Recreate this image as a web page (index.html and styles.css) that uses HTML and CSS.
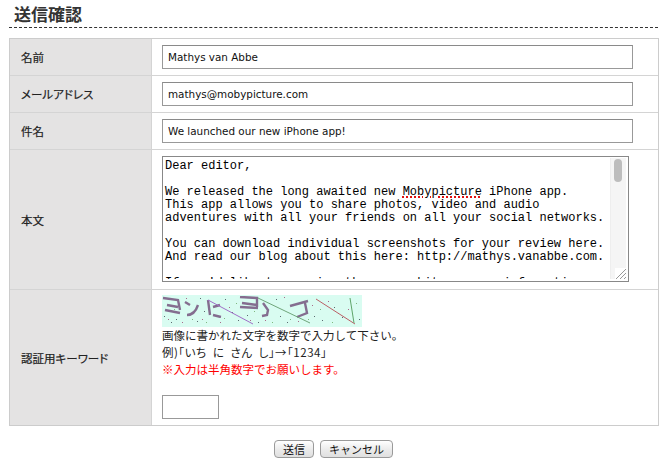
FILE: index.html
```html
<!DOCTYPE html>
<html lang="ja">
<head>
<meta charset="utf-8">
<title>送信確認</title>
<link rel="stylesheet" href="styles.css">
</head>
<body>
<h1 class="title">送信確認</h1>
<div class="form">
  <div class="row row-short">
    <div class="label">名前</div>
    <div class="field"><input class="text" value="Mathys van Abbe"></div>
  </div>
  <div class="row row-short">
    <div class="label">メールアドレス</div>
    <div class="field"><input class="text" value="mathys@mobypicture.com"></div>
  </div>
  <div class="row row-short">
    <div class="label">件名</div>
    <div class="field"><input class="text" value="We launched our new iPhone app!"></div>
  </div>
  <div class="row row-body">
    <div class="label">本文</div>
    <div class="field">
      <div class="area">
        <div class="area-text">Dear editor,

We released the long awaited new <span class="spell">Mobypicture</span> iPhone app.
This app allows you to share photos, video and audio
adventures with all your friends on all your social networks.

You can download individual screenshots for your review here.
And read our blog about this here: http://mathys.vanabbe.com.

If you'd like to receive the press kit or more information</div>
        <div class="scroll">
          <div class="thumb"></div>
          <svg class="grip" width="11" height="11" viewBox="0 0 11 11"><path d="M1 11 11 1M5 11l6-6M9 11l2-2" stroke="#999" fill="none"/></svg>
        </div>
      </div>
    </div>
  </div>
  <div class="row row-captcha">
    <div class="label">認証用キーワード</div>
    <div class="field captcha-field">
      <svg class="captcha" width="200" height="32" viewBox="0 0 200 32">
        <defs>
          <filter id="soft" x="-5%" y="-5%" width="110%" height="110%"><feGaussianBlur stdDeviation=".55"/></filter>
        </defs>
        <rect width="200" height="32" fill="#d9fcf1"/>
        <path fill="#5c6a70" d="M2 21h1v1H2zM9 27h1v1H9zM14 24h1v1h-1zM38 3h1v1h-1zM35 26h1v1h-1zM42 16h1v1h-1zM63 4h1v1h-1zM70 17h1v1h-1zM76 25h1v1h-1zM85 20h1v1h-1zM96 27h1v1h-1zM114 4h1v1h-1zM118 21h1v1h-1zM125 27h1v1h-1zM152 21h1v1h-1zM160 25h1v1h-1zM172 12h1v1h-1zM180 22h1v1h-1zM197 24h1v1h-1z"/>
        <path fill="#a86a8a" d="M6 24h1v1H6zM24 3h1v1h-1zM20 27h1v1h-1zM40 24h1v1h-1zM58 27h1v1h-1zM67 12h1v1h-1zM88 25h1v1h-1zM103 25h1v1h-1zM122 2h1v1h-1zM136 26h1v1h-1zM150 10h1v1h-1zM166 6h1v1h-1zM176 18h1v1h-1zM186 14h1v1h-1z"/>
        <path fill="#7fb87f" d="M12 14h1v1h-1zM30 24h1v1h-1zM44 27h1v1h-1zM62 23h1v1h-1zM74 8h1v1h-1zM92 16h1v1h-1zM110 27h1v1h-1zM128 24h1v1h-1zM146 24h1v1h-1zM158 14h1v1h-1zM170 27h1v1h-1zM194 8h1v1h-1z"/>
        <g fill="none" stroke="#76557f" stroke-width="2.4" opacity=".85" filter="url(#soft)">
          <path d="M1 3l15 2 2 10M5 10l11 2M3 15l15 3"/>
          <path d="M23 7l5 3M25 20c5 0 9-4 11-10"/>
          <path d="M46 5l2 15M51 12l7-2M51 20l8 2"/>
          <path d="M78 2l17 1v9M80 8l15 2M78 12l18 1"/>
          <path d="M101 8l5 7-1 5-5 1"/>
          <path d="M128 11l18-5M143 8l2 10-10 4"/>
        </g>
        <path d="M46 5l45 24" stroke="#a06fc8" fill="none"/>
        <path d="M96 3l52 25" stroke="#6fa57a" fill="none"/>
        <path d="M154 4l39 25" stroke="#bb6066" fill="none"/>
        <path d="M188 3l4 25" stroke="#5fa56a" fill="none"/>
      </svg>
      <p class="note">画像に書かれた文字を数字で入力して下さい。</p>
      <p class="note tight">例)「いち  に  さん  し」→「1234」</p>
      <p class="note warn">※入力は半角数字でお願いします。</p>
      <input class="key">
    </div>
  </div>
</div>
<div class="actions">
  <button class="btn" type="button">送信</button>
  <button class="btn" type="button">キャンセル</button>
</div>
</body>
</html>
```
FILE: styles.css
```css
html, body { margin: 0; padding: 0; background: #fff; }
body {
  width: 672px;
  height: 476px;
  overflow: hidden;
  font-family: "Noto Sans CJK JP", "Liberation Sans", sans-serif;
  font-size: 11px;
  color: #222;
}
.title {
  margin: 0 0 0 9px;
  width: 649px;
  height: 28px;
  box-sizing: border-box;
  padding-left: 5px;
  font-size: 17px;
  line-height: 27px;
  font-weight: 700;
  color: #333;
  border-bottom: 1px dashed #333;
}
.form {
  margin: 10px 0 0 9px;
  width: 650px;
  box-sizing: border-box;
  border: 1px solid #ccc;
  display: flex;
  flex-direction: column;
  gap: 1px;
  background: #d4d4d4;
}
.row { display: grid; grid-template-columns: 141px 1fr; gap: 1px; }
.row-short { height: 36px; }
.row-body { height: 139px; }
.row-captcha { height: 135px; }
.label {
  background: #e4e3e3;
  display: flex;
  align-items: center;
  padding-left: 11px;
  font-size: 11.5px;
  font-feature-settings: "palt";
  -webkit-text-stroke: 0.2px #222;
  color: #222;
}
.field {
  background: #fff;
  display: flex;
  align-items: flex-start;
  padding: 6px 0 0 10px;
}
.text {
  width: 471px;
  height: 24px;
  box-sizing: border-box;
  border: 1px solid #999;
  border-top-color: #8a8a8a;
  padding: 0 5px;
  margin: 0;
  outline: 0;
  font-family: "DejaVu Sans", sans-serif;
  font-size: 10.4px;
  color: #111;
  background: #fff;
}
.area {
  width: 467px;
  height: 126px;
  box-sizing: border-box;
  border: 1px solid #888;
  display: flex;
  overflow: hidden;
  background: #fff;
}
.area-text {
  flex: 1;
  min-width: 0;
  margin-bottom: 2px;
  padding: 3px 0 0 2px;
  white-space: pre;
  overflow: hidden;
  font-family: "Liberation Mono", monospace;
  font-size: 12px;
  line-height: 13px;
  color: #000;
}
.spell { text-decoration: underline dotted #e01010 2px; text-underline-offset: 1px; }
.scroll {
  width: 15px;
  flex: none;
  background: #f5f5f5;
  border-left: 1px solid #eee;
  margin: 1px 2px 2px 0;
  position: relative;
}
.thumb { width: 8px; height: 23px; margin: 1px 0 0 3px; border-radius: 4px; background: #bdbdbd; }
.grip { position: absolute; right: 0; bottom: 0; background: #fff; }
.captcha-field { flex-direction: column; padding-top: 5px; }
.captcha { display: block; }
.note { margin: 0; height: 17px; line-height: 17px; font-size: 11.5px; color: #222; white-space: pre; }
.tight { font-feature-settings: "palt"; letter-spacing: 0.5px; }
.warn { color: #f00; }
.key {
  width: 57px;
  height: 24px;
  box-sizing: border-box;
  margin: 17px 0 0;
  padding: 0;
  border: 1px solid #999;
  outline: 0;
  background: #fff;
}
.actions { display: flex; justify-content: center; gap: 6px; margin-top: 14px; padding-right: 5px; }
.btn {
  height: 18px;
  padding: 0 8px;
  border: 1px solid #9a9a9a;
  border-radius: 4px;
  background: linear-gradient(#fff, #ececec 50%, #e0e0e0);
  font-family: "Noto Sans CJK JP", sans-serif;
  font-size: 11px;
  line-height: 16px;
  color: #111;
}
```
